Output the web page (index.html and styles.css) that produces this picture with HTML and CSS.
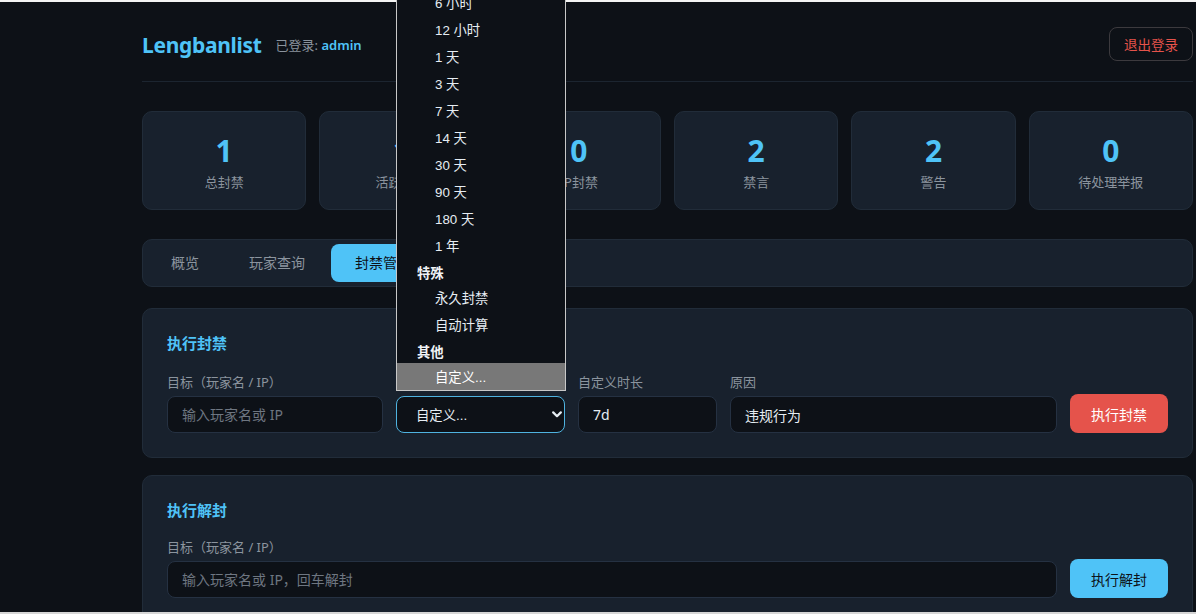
FILE: index.html
```html
<!DOCTYPE html>
<html lang="zh-CN">
<head>
<meta charset="utf-8">
<title>Lengbanlist 管理面板</title>
<link rel="stylesheet" href="styles.css">
</head>
<body>
<div class="app">
  <header class="topbar">
    <div class="brand">
      <h1 class="logo">Lengbanlist</h1>
      <span class="session">已登录: <b class="user">admin</b></span>
    </div>
    <button class="btn-logout" type="button">退出登录</button>
  </header>

  <section class="stats">
    <div class="stat"><div class="stat-num">1</div><div class="stat-label">总封禁</div></div>
    <div class="stat"><div class="stat-num">1</div><div class="stat-label">活跃封禁</div></div>
    <div class="stat"><div class="stat-num">0</div><div class="stat-label">IP封禁</div></div>
    <div class="stat"><div class="stat-num">2</div><div class="stat-label">禁言</div></div>
    <div class="stat"><div class="stat-num">2</div><div class="stat-label">警告</div></div>
    <div class="stat"><div class="stat-num">0</div><div class="stat-label">待处理举报</div></div>
  </section>

  <nav class="tabs">
    <button class="tab" type="button">概览</button>
    <button class="tab" type="button">玩家查询</button>
    <button class="tab tab-active" type="button">封禁管理</button>
    <button class="tab" type="button">举报处理</button>
  </nav>

  <section class="panel">
    <h2 class="panel-title">执行封禁</h2>
    <div class="ban-row">
      <label class="field">
        <span class="field-label">目标（玩家名 / IP）</span>
        <input class="input" type="text" placeholder="输入玩家名或 IP">
      </label>
      <div class="field">
        <span class="field-label">封禁时长</span>
        <div class="select-wrap">
          <button class="select" type="button">
            <span>自定义...</span>
            <svg class="chevron" width="10" height="7" viewBox="0 0 10 7"><path d="M1.2 1.4 5 5.2 8.8 1.4" fill="none" stroke="currentColor" stroke-width="2.2" stroke-linecap="round" stroke-linejoin="round"/></svg>
          </button>
          <ul class="menu" role="listbox">
            <li class="menu-group">临时</li>
            <li class="menu-item">1 小时</li>
            <li class="menu-item">6 小时</li>
            <li class="menu-item">12 小时</li>
            <li class="menu-item">1 天</li>
            <li class="menu-item">3 天</li>
            <li class="menu-item">7 天</li>
            <li class="menu-item">14 天</li>
            <li class="menu-item">30 天</li>
            <li class="menu-item">90 天</li>
            <li class="menu-item">180 天</li>
            <li class="menu-item">1 年</li>
            <li class="menu-group">特殊</li>
            <li class="menu-item">永久封禁</li>
            <li class="menu-item">自动计算</li>
            <li class="menu-group">其他</li>
            <li class="menu-item is-selected">自定义...</li>
          </ul>
        </div>
      </div>
      <label class="field">
        <span class="field-label">自定义时长</span>
        <input class="input" type="text" value="7d">
      </label>
      <label class="field">
        <span class="field-label">原因</span>
        <input class="input" type="text" value="违规行为">
      </label>
      <button class="btn btn-danger" type="button">执行封禁</button>
    </div>
  </section>

  <section class="panel panel-next">
    <h2 class="panel-title">执行解封</h2>
    <div class="unban-row">
      <label class="field">
        <span class="field-label">目标（玩家名 / IP）</span>
        <input class="input" type="text" placeholder="输入玩家名或 IP，回车解封">
      </label>
      <button class="btn btn-primary" type="button">执行解封</button>
    </div>
  </section>
</div>
<div class="window-edge"></div>
</body>
</html>
```

FILE: styles.css
```css
* {
  box-sizing: border-box;
}

html,
body {
  margin: 0;
  height: 614px;
  overflow: hidden;
  background: #0d1117;
}

body {
  font-family: "Noto Sans", "Noto Sans CJK SC", sans-serif;
  color: #e6edf3;
}

/* thin light frame of the window */
.window-edge {
  position: fixed;
  inset: 0;
  border-top: 2px solid #f4f4f4;
  border-bottom: 2px solid #d6d6d6;
  pointer-events: none;
  z-index: 5;
}

.app {
  width: 1051px;
  margin-left: 142px;
  padding-top: 27px;
}

/* header */
.topbar {
  display: flex;
  align-items: center;
  justify-content: space-between;
  padding-bottom: 20px;
  border-bottom: 1px solid #1c2530;
}

.brand {
  display: flex;
  align-items: center;
  gap: 14px;
}

.logo {
  margin: 0;
  font-size: 21px;
  line-height: 28px;
  font-weight: 700;
  letter-spacing: -0.3px;
  color: #4fc3f7;
  position: relative;
  top: 1px;
}

.session {
  font-size: 13px;
  color: #8b949e;
}

.user {
  color: #4fc3f7;
  font-weight: 600;
}

.btn-logout {
  height: 34px;
  padding: 0 14px;
  border: 1px solid #3c3a3e;
  border-radius: 8px;
  background: transparent;
  color: #e5534b;
  font: 13.5px "Noto Sans", "Noto Sans CJK SC", sans-serif;
}

/* stats */
.stats {
  display: grid;
  grid-template-columns: repeat(6, 1fr);
  gap: 13px;
  margin-top: 29px;
}

.stat {
  background: #18212d;
  border: 1px solid #212c39;
  border-radius: 10px;
  padding: 19px 8px 18px;
  text-align: center;
}

.stat-num {
  font-size: 30px;
  line-height: 40px;
  font-weight: 700;
  color: #4fc3f7;
}

.stat-label {
  margin-top: 2px;
  font-size: 13px;
  line-height: 18px;
  color: #8b949e;
}

/* tabs */
.tabs {
  display: flex;
  gap: 2px;
  margin-top: 29px;
  padding: 4px;
  background: #18212d;
  border: 1px solid #212c39;
  border-radius: 10px;
}

.tab {
  padding: 11px 24px;
  border: none;
  border-radius: 8px;
  background: transparent;
  color: #8b949e;
  font: 14px/16px "Noto Sans", "Noto Sans CJK SC", sans-serif;
}

.tab-active {
  background: #4fc3f7;
  color: #0d1117;
}

/* panels */
.panel {
  margin-top: 21px;
  padding: 24px;
  background: #18212d;
  border: 1px solid #212c39;
  border-radius: 10px;
}

.panel-next {
  margin-top: 17px;
}

.panel-title {
  margin: 0 0 20px;
  font-size: 15px;
  line-height: 20px;
  font-weight: 700;
  color: #4fc3f7;
}

.panel-next .panel-title {
  margin-bottom: 18px;
}

.ban-row {
  display: grid;
  grid-template-columns: 216px 169px 139px 1fr auto;
  gap: 13px;
  align-items: end;
}

.unban-row {
  display: grid;
  grid-template-columns: 1fr auto;
  gap: 13px;
  align-items: end;
}

.field {
  display: flex;
  flex-direction: column;
  gap: 5px;
  min-width: 0;
}

.field-label {
  font-size: 13px;
  line-height: 18px;
  color: #8b949e;
}

.input {
  width: 100%;
  height: 37px;
  padding: 0 14px;
  background: #0d1117;
  border: 1px solid #253142;
  border-radius: 8px;
  color: #e6edf3;
  font: 14px "Noto Sans", "Noto Sans CJK SC", sans-serif;
  outline: none;
}

.input::placeholder {
  color: #6e7681;
}

.btn {
  height: 39px;
  padding: 0 21px;
  border: none;
  border-radius: 8px;
  font: 14px "Noto Sans", "Noto Sans CJK SC", sans-serif;
  white-space: nowrap;
}

.btn-danger {
  background: #e5534b;
  color: #fff;
}

.btn-primary {
  background: #4fc3f7;
  color: #0d1117;
}

/* duration select with its open list */
.select-wrap {
  position: relative;
}

.select {
  display: flex;
  align-items: center;
  justify-content: space-between;
  width: 100%;
  height: 37px;
  padding: 0 2px 0 19px;
  background: #0d1117;
  border: 1px solid #4fb3e0;
  border-radius: 8px;
  color: #e6edf3;
  font: 13.33px "Liberation Sans", "Noto Sans CJK SC", sans-serif;
}

.chevron {
  color: #e6edf3;
}

.menu {
  position: absolute;
  left: 0;
  right: -1px;
  bottom: calc(100% + 5px);
  margin: 0;
  padding: 0;
  list-style: none;
  background: #0d1117;
  border: 1px solid #c8c8c8;
  font: 13.33px "Liberation Sans", "Noto Sans CJK SC", sans-serif;
  color: #e6edf3;
  z-index: 10;
}

.menu-item {
  height: 27px;
  padding: 3px 0 0 38px;
  line-height: 23px;
  white-space: nowrap;
}

.menu-group {
  height: 25px;
  padding: 4px 0 0 20px;
  line-height: 21px;
  font-weight: 700;
  color: #f0f3f6;
}

.menu-item.is-selected {
  background: #787878;
  color: #fff;
}
```
